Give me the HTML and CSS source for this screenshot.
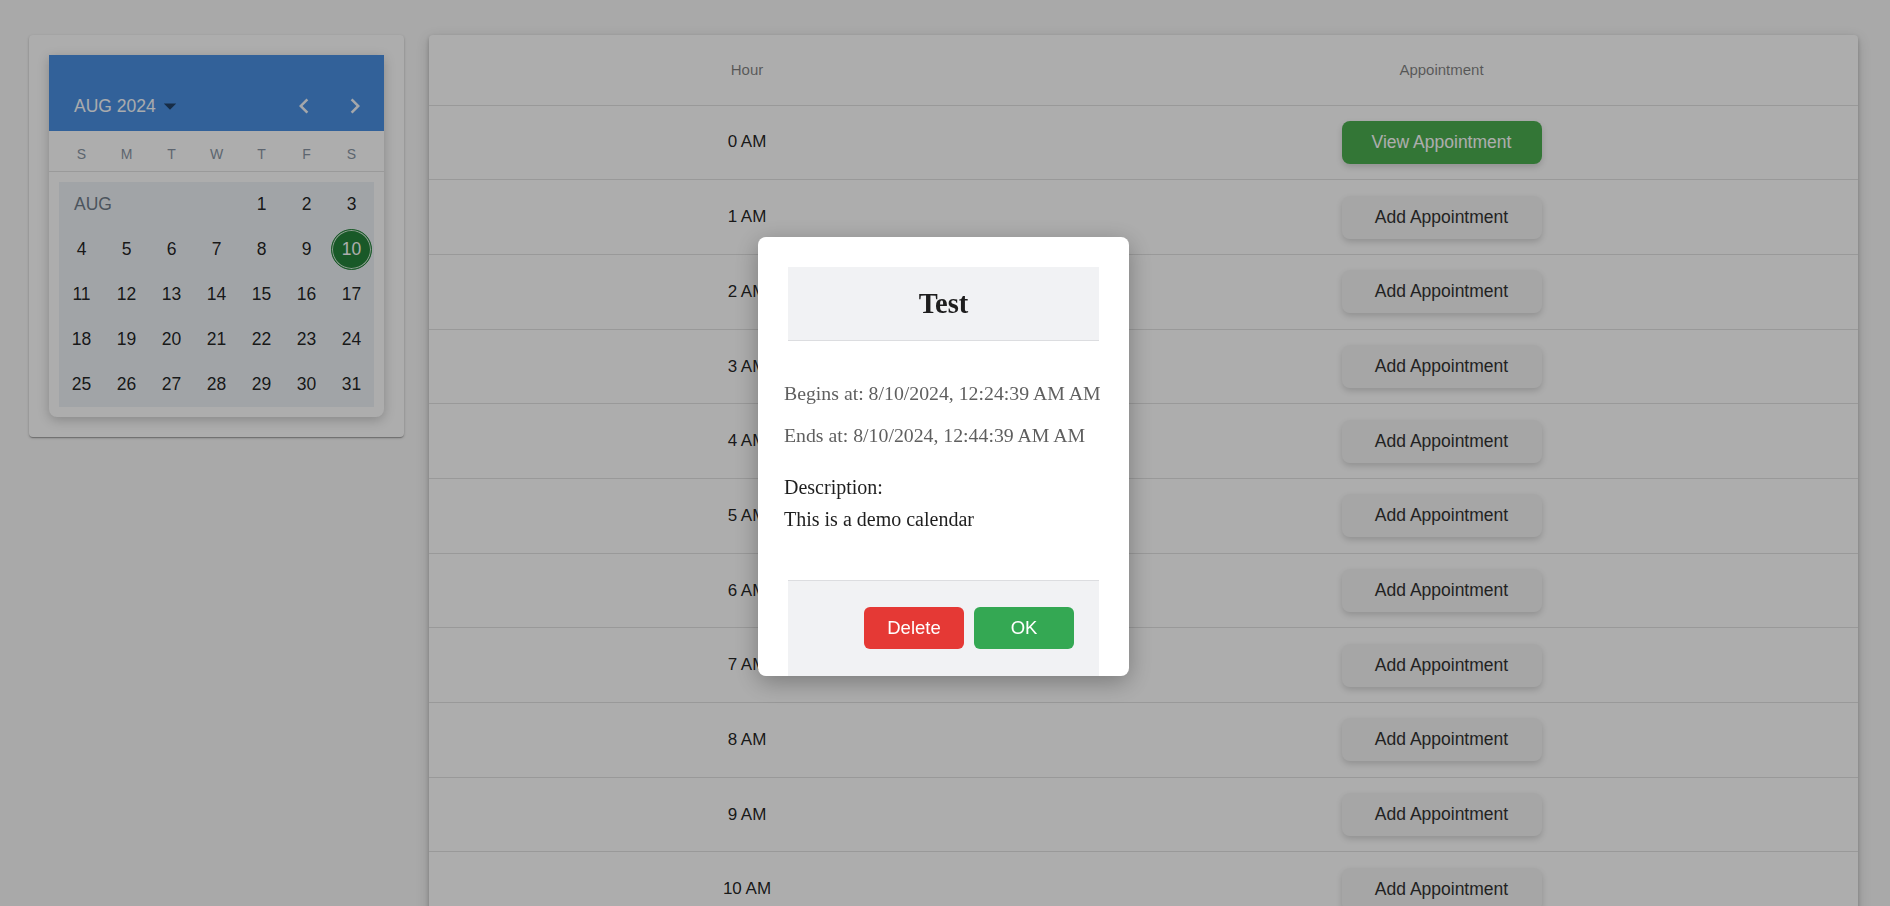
FILE: index.html
```html
<!DOCTYPE html>
<html lang="en">
<head>
<meta charset="utf-8">
<title>Calendar</title>
<link rel="stylesheet" href="styles.css">
</head>
<body>
<div class="page">
  <aside class="side-card">
    <div class="calendar">
      <div class="cal-header">
        <div class="cal-title">AUG 2024<svg class="caret" viewBox="0 0 24 24"><path d="M7 10l5 5 5-5z"/></svg></div>
        <div class="cal-nav">
          <svg class="chev" viewBox="0 0 24 24"><path d="M15.41 7.41 14 6l-6 6 6 6 1.41-1.41L10.83 12z"/></svg>
          <svg class="chev" viewBox="0 0 24 24"><path d="M10 6 8.59 7.41 13.17 12l-4.58 4.59L10 18l6-6z"/></svg>
        </div>
      </div>
      <div class="weekdays"><span>S</span><span>M</span><span>T</span><span>W</span><span>T</span><span>F</span><span>S</span></div>
      <div class="cal-body">
        <div class="days">
          <span class="month-label">AUG</span>
          <span>1</span><span>2</span><span>3</span>
          <span>4</span><span>5</span><span>6</span><span>7</span><span>8</span><span>9</span><span><b class="sel">10</b></span>
          <span>11</span><span>12</span><span>13</span><span>14</span><span>15</span><span>16</span><span>17</span>
          <span>18</span><span>19</span><span>20</span><span>21</span><span>22</span><span>23</span><span>24</span>
          <span>25</span><span>26</span><span>27</span><span>28</span><span>29</span><span>30</span><span>31</span>
        </div>
      </div>
    </div>
  </aside>
  <main class="table-card">
    <div class="row head"><div class="cell">Hour</div><div class="cell">Appointment</div><div></div></div>
    <div class="row"><div class="cell hour">0 AM</div><div class="cell"><button class="btn view">View Appointment</button></div><div></div></div>
    <div class="row"><div class="cell hour">1 AM</div><div class="cell"><button class="btn">Add Appointment</button></div><div></div></div>
    <div class="row"><div class="cell hour">2 AM</div><div class="cell"><button class="btn">Add Appointment</button></div><div></div></div>
    <div class="row"><div class="cell hour">3 AM</div><div class="cell"><button class="btn">Add Appointment</button></div><div></div></div>
    <div class="row"><div class="cell hour">4 AM</div><div class="cell"><button class="btn">Add Appointment</button></div><div></div></div>
    <div class="row"><div class="cell hour">5 AM</div><div class="cell"><button class="btn">Add Appointment</button></div><div></div></div>
    <div class="row"><div class="cell hour">6 AM</div><div class="cell"><button class="btn">Add Appointment</button></div><div></div></div>
    <div class="row"><div class="cell hour">7 AM</div><div class="cell"><button class="btn">Add Appointment</button></div><div></div></div>
    <div class="row"><div class="cell hour">8 AM</div><div class="cell"><button class="btn">Add Appointment</button></div><div></div></div>
    <div class="row"><div class="cell hour">9 AM</div><div class="cell"><button class="btn">Add Appointment</button></div><div></div></div>
    <div class="row"><div class="cell hour">10 AM</div><div class="cell"><button class="btn">Add Appointment</button></div><div></div></div>
  </main>
</div>
<div class="overlay">
  <div class="modal">
    <div class="modal-head"><h2>Test</h2></div>
    <p class="time">Begins at: 8/10/2024, 12:24:39 AM AM</p>
    <p class="time next">Ends at: 8/10/2024, 12:44:39 AM AM</p>
    <p class="desc-label">Description:</p>
    <p class="desc">This is a demo calendar</p>
    <div class="modal-foot">
      <button class="mbtn delete">Delete</button>
      <button class="mbtn ok">OK</button>
    </div>
  </div>
</div>
</body>
</html>
```
FILE: styles.css
```css
html, body {
  margin: 0;
  height: 100%;
  overflow: hidden;
}
body {
  background: #f9f9f9;
  font-family: "Liberation Sans", Arial, sans-serif;
}
.page {
  display: flex;
  align-items: flex-start;
  gap: 25px;
  padding: 35px 32px 0 29px;
}
.side-card {
  width: 375px;
  flex: none;
  box-sizing: border-box;
  padding: 20px;
  background: #fff;
  border-radius: 4px;
  box-shadow: 0 1px 3px rgba(0,0,0,.2), 0 1px 1px rgba(0,0,0,.14), 0 2px 1px -1px rgba(0,0,0,.12);
}
.calendar {
  background: #fff;
  border-radius: 0 0 8px 8px;
  box-shadow: 0 3px 12px rgba(0,0,0,.22);
  overflow: hidden;
}
.cal-header {
  height: 76px;
  box-sizing: border-box;
  background: #4a90e2;
  display: flex;
  align-items: flex-end;
  justify-content: space-between;
  padding: 0 14px 10px 25px;
}
.cal-title {
  display: flex;
  align-items: center;
  height: 30px;
  color: #fafcff;
  font-size: 17.5px;
}
.caret {
  width: 30px;
  height: 30px;
  fill: rgba(0,0,0,.54);
  margin-left: -1px;
}
.cal-nav {
  display: flex;
  gap: 21px;
}
.chev {
  width: 30px;
  height: 30px;
  fill: #f4f7fb;
}
.weekdays {
  display: grid;
  grid-template-columns: repeat(7, 45px);
  padding: 5px 10px 0;
  height: 41px;
  box-sizing: border-box;
  border-bottom: 1px solid #e3e3e3;
  align-items: center;
  justify-items: center;
  font-size: 14px;
  color: #8a96a4;
}
.cal-body {
  padding: 10px;
}
.days {
  display: grid;
  grid-template-columns: repeat(7, 45px);
  grid-auto-rows: 45px;
  background: #edf2f7;
  font-size: 17.5px;
  color: rgba(0,0,0,.87);
}
.days span {
  display: flex;
  align-items: center;
  justify-content: center;
}
.days .month-label {
  grid-column: span 4;
  justify-content: flex-start;
  padding-left: 15px;
  color: #717d8a;
}
.sel {
  display: flex;
  align-items: center;
  justify-content: center;
  width: 39px;
  height: 39px;
  border-radius: 50%;
  border: 1px solid #26843b;
  box-shadow: inset 0 0 0 1px #cfe8d5;
  background: #26843b;
  color: #fff;
  font-weight: normal;
}
.table-card {
  flex: 1;
  background: #fff;
  border-radius: 4px;
  box-shadow: 0 2px 4px rgba(0,0,0,.2), 0 4px 14px rgba(0,0,0,.16);
}
.row {
  display: grid;
  grid-template-columns: 636px 753px 1fr;
  align-items: center;
  height: 74.7px;
  box-sizing: border-box;
  border-bottom: 1px solid #e2e2e2;
}
.row.head {
  height: 70.6px;
  font-size: 15px;
  color: rgba(0,0,0,.5);
}
.cell {
  text-align: center;
}
.hour {
  font-size: 17px;
  color: rgba(0,0,0,.87);
}
.btn {
  width: 200px;
  height: 43px;
  border: 0;
  border-radius: 8px;
  background: #f5f5f5;
  color: #333;
  font-family: "Liberation Sans", Arial, sans-serif;
  font-size: 17.5px;
  box-shadow: 0 3px 6px rgba(0,0,0,.16);
  padding: 0;
}
.btn.view {
  background: #4caf50;
  color: #fff;
}
.overlay {
  position: fixed;
  inset: 0;
  background: rgba(0,0,0,.32);
  display: flex;
  align-items: center;
  justify-content: center;
}
.modal {
  width: 371px;
  height: 439px;
  box-sizing: border-box;
  padding: 30px 30px 0 26px;
  margin: 7px 3px 0 0;
  background: #fff;
  border-radius: 8px;
  overflow: hidden;
  box-shadow: 0 6px 24px rgba(0,0,0,.3);
  font-family: "Liberation Serif", "Times New Roman", serif;
}
.modal-head {
  margin-left: 4px;
  height: 74px;
  box-sizing: border-box;
  background: #f1f2f4;
  border-bottom: 1px solid #dcdde0;
  display: flex;
  align-items: center;
  justify-content: center;
}
.modal-head h2 {
  margin: 0;
  font-size: 28.5px;
  font-weight: bold;
  color: #1e1e1e;
}
.time {
  margin: 41px 0 0;
  line-height: 22px;
  font-size: 19.8px;
  color: #5f5f5f;
  white-space: nowrap;
}
.time.next {
  margin-top: 20px;
}
.desc-label {
  margin: 30px 0 0;
  line-height: 22px;
  font-size: 20px;
  color: #1e1e1e;
}
.desc {
  margin: 10px 0 0;
  line-height: 22px;
  font-size: 20px;
  color: #1e1e1e;
}
.modal-foot {
  margin: 50px 0 0 4px;
  background: #f1f2f4;
  border-top: 1px solid #dcdde0;
  padding: 26px 25px 60px;
  display: flex;
  justify-content: flex-end;
  gap: 10px;
}
.mbtn {
  width: 100px;
  height: 42px;
  border: 0;
  border-radius: 6px;
  color: #fff;
  font-family: "Liberation Sans", Arial, sans-serif;
  font-size: 18.5px;
  padding: 0;
}
.mbtn.delete {
  background: #e53935;
}
.mbtn.ok {
  background: #34a853;
}
```
